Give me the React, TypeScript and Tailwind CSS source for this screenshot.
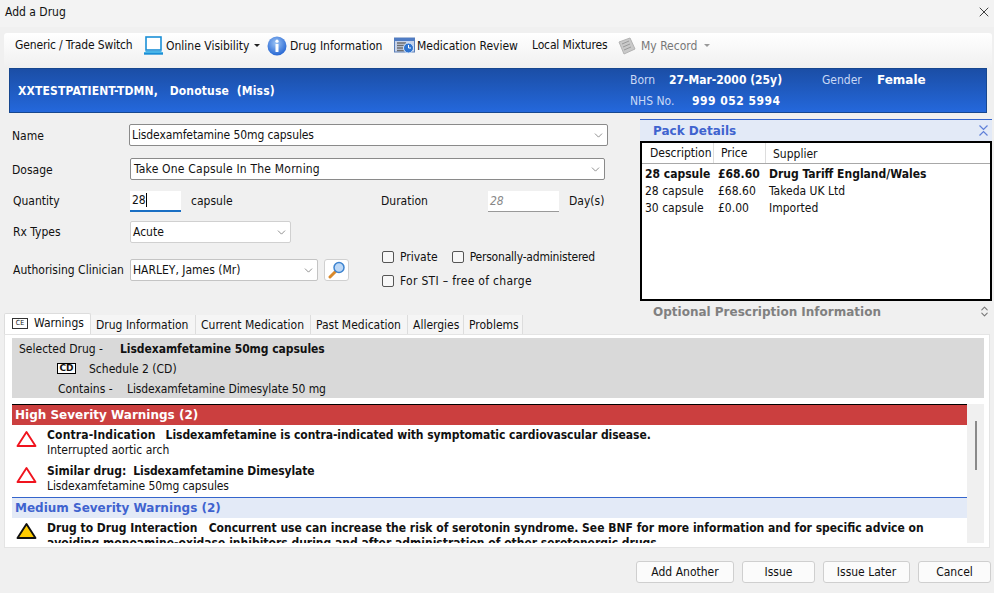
import { X, ChevronDown, ChevronsUpDown } from "lucide-react";

const font = "font-['DejaVu_Sans_Condensed','DejaVu_Sans',sans-serif]";
const boldFont = "font-['DejaVu_Sans_Condensed','DejaVu_Sans',sans-serif] font-bold";
const wideBold = "font-['DejaVu_Sans',sans-serif] font-bold";

function Laptop() {
  return (
    <svg width="21" height="19" viewBox="0 0 21 19" className="shrink-0">
      <rect x="3" y="1" width="15" height="13" fill="#fff" stroke="#1b8fd6" strokeWidth="1.6" />
      <path d="M1 17.500h19" stroke="#1b8fd6" strokeWidth="2.400" />
      <path d="M3 15l-2 2h19l-2-2z" fill="#48b4e8" />
    </svg>
  );
}

function InfoIcon() {
  return (
    <svg width="20" height="20" viewBox="0 0 20 20" className="shrink-0">
      <defs>
        <radialGradient id="info" cx="45%" cy="35%" r="70%">
          <stop offset="0" stopColor="#9cc4f5" />
          <stop offset="1" stopColor="#1d5fd0" />
        </radialGradient>
      </defs>
      <circle cx="10" cy="10" r="9.500" fill="url(#info)" />
      <circle cx="10" cy="5.200" r="1.600" fill="#fff" />
      <rect x="8.500" y="8" width="3" height="8" rx="0.500" fill="#fff" />
    </svg>
  );
}

function ReviewIcon() {
  return (
    <svg width="21" height="17" viewBox="0 0 21 17" className="shrink-0">
      <rect x="0.500" y="1" width="20" height="14" fill="#c7d3ea" stroke="#5a7fb8" />
      <rect x="0.500" y="1" width="20" height="3" fill="#4f7cc4" />
      <path d="M3 6h9M3 8.500h9M3 11h9M3 13.500h7" stroke="#6d6d6d" strokeWidth="1.300" />
      <circle cx="14.500" cy="11" r="5" fill="#2f74d0" stroke="#dce9fa" />
      <path d="M14.500 8v3h2.500" stroke="#fff" fill="none" />
    </svg>
  );
}

function RecordIcon() {
  return (
    <svg width="18" height="18" viewBox="0 0 18 18" className="shrink-0">
      <path d="M1 5l11-4 5 11-11 5z" fill="#c9c9c9" stroke="#b3b3b3" />
      <path d="M4 7l7-3M5 10l7-3M6 13l7-3" stroke="#9a9a9a" />
    </svg>
  );
}

function SearchIcon() {
  return (
    <svg width="18" height="18" viewBox="0 0 18 18">
      <path d="M7.500 10.500L2 16" stroke="#d9892b" strokeWidth="3" strokeLinecap="round" />
      <circle cx="11" cy="6.500" r="5" fill="#bcd8f7" stroke="#3d83cf" strokeWidth="1.500" />
    </svg>
  );
}

function CollapseIcon() {
  return (
    <svg width="11" height="13" viewBox="0 0 11 13" className="text-[#5f7fd8]">
      <path d="M1.500 1.500L5.500 5.500L9.500 1.500M1.500 11.500L5.500 7.500L9.500 11.500" fill="none" stroke="currentColor" strokeWidth="1.200" />
    </svg>
  );
}

function Triangle({ fill, stroke }: { fill: string; stroke: string }) {
  return (
    <svg width="21" height="18" viewBox="0 0 21 18" className="shrink-0">
      <path d="M10.500 2L19.500 16H1.500z" fill={fill} stroke={stroke} strokeWidth="1.900" strokeLinejoin="round" />
    </svg>
  );
}

function Combo({ text, className, textClass }: { text: string; className: string; textClass?: string }) {
  return (
    <div className={`flex h-[22px] items-center justify-between rounded-[2px] bg-white pl-[2px] pr-[2px] ${className}`}>
      <span className={textClass}>{text}</span>
      <ChevronDown size={13} strokeWidth={1.2} className="text-[#555]" />
    </div>
  );
}

function Check({ label, className, textClass }: { label: string; className?: string; textClass?: string }) {
  return (
    <div className={`flex items-center gap-[6px] ${className ?? ""}`}>
      <span className="h-[12px] w-[12px] rounded-[2px] border border-[#555] bg-[#f7f7f7]" />
      <span className={textClass}>{label}</span>
    </div>
  );
}

const packs = [
  { d: "28 capsule", p: "£68.60", s: "Drug Tariff England/Wales", bold: true },
  { d: "28 capsule", p: "£68.60", s: "Takeda UK Ltd" },
  { d: "30 capsule", p: "£0.00", s: "Imported" },
];

const tabs = [
  ["Drug Information", "w-[105px]"],
  ["Current Medication", "w-[115px]"],
  ["Past Medication", "w-[97px]"],
  ["Allergies", "w-[56px]"],
  ["Problems", "w-[59px]"],
];

export default function App() {
  return (
    <div className={`h-[593px] w-[994px] overflow-hidden bg-[#f0f0f0] text-[12px] leading-none text-[#111] ${font}`}>
      <div className="flex h-[27px] items-start justify-between bg-[#f3f3f3] pl-[5px] pr-[1px] pt-[6px]">
        <span>Add a Drug</span>
        <X size={16} strokeWidth={1.2} className="mr-[1px] mt-[-2px]" />
      </div>

      <div className="ml-[4px] mt-[6px] flex h-[35px] w-[988px] items-center rounded-t-[3px] bg-gradient-to-b from-white to-[#f0f0f0] pb-[10px] pl-[11px]">
        <span className="mt-[-2px] w-[128px] tracking-[-0.15px]">Generic / Trade Switch</span>
        <div className="flex w-[124px] items-center gap-[2px]">
          <Laptop />
          <span>Online Visibility</span>
          <span className="ml-[3px] h-0 w-0 border-x-[3px] border-t-[3px] border-x-transparent border-t-[#222]" />
        </div>
        <div className="flex w-[127px] items-center gap-[3px]">
          <InfoIcon />
          <span>Drug Information</span>
        </div>
        <div className="flex w-[138px] items-center gap-[2px]">
          <ReviewIcon />
          <span>Medication Review</span>
        </div>
        <span className="mt-[-2px] w-[86px] tracking-[-0.15px]">Local Mixtures</span>
        <div className="flex items-center gap-[5px] text-[#777]">
          <RecordIcon />
          <span>My Record</span>
          <span className="ml-[2px] h-0 w-0 border-x-[3px] border-t-[3px] border-x-transparent border-t-[#999]" />
        </div>
      </div>

      <div className="ml-[9px] flex h-[45px] w-[978px] items-center justify-between border border-[#17478f] bg-gradient-to-b from-[#1b4ea6] to-[#2468dc] text-white">
        <div className={`pl-[8px] text-[12px] tracking-[0.15px] ${boldFont}`}>XXTESTPATIENT-TDMN,&nbsp;&nbsp; Donotuse&nbsp; (Miss)</div>
        <div className="flex w-[356px] flex-col gap-[9px] text-[#c9d8f5]">
          <div className="flex items-center">
            <span className="w-[39px]">Born</span>
            <span className={`w-[153px] text-white ${boldFont}`}>27-Mar-2000 (25y)</span>
            <span className="w-[55px]">Gender</span>
            <span className={`text-white ${wideBold}`}>Female</span>
          </div>
          <div className="flex items-center">
            <span className="w-[62px]">NHS No.</span>
            <span className={`tracking-[0.5px] text-white ${boldFont}`}>999 052 5994</span>
          </div>
        </div>
      </div>

      <div className="mt-[6px] flex h-[194px]">
        <div className="w-[640px] pt-[5px]">
          <div className="flex h-[22px] items-center">
            <span className="w-[129px] pl-[12px] pt-[1px]">Name</span>
            <Combo text="Lisdexamfetamine 50mg capsules" textClass="tracking-[-0.1px]" className="w-[479px] border border-[#8a8a8a]" />
          </div>
          <div className="mt-[12px] flex h-[22px] items-center">
            <span className="w-[130px] pl-[12px] pt-[1px]">Dosage</span>
            <Combo text="Take One Capsule In The Morning" textClass="pl-[1px] tracking-[0.2px]" className="w-[475px] border border-[#8a8a8a]" />
          </div>
          <div className="mt-[10px] flex h-[22px] items-center">
            <span className="w-[130px] pl-[13px]">Quantity</span>
            <div className="flex h-[21px] w-[51px] items-center border-b-2 border-[#1a6fc4] bg-white pl-[2px]">
              28<span className="h-[14px] w-px bg-black" />
            </div>
            <span className="ml-[10px] w-[190px]">capsule</span>
            <span className="w-[107px]">Duration</span>
            <div className="flex h-[21px] w-[71px] items-center border-b border-[#999] bg-white pl-[2px] italic text-[#888]">28</div>
            <span className="ml-[10px]">Day(s)</span>
          </div>
          <div className="mt-[9px] flex h-[22px] items-center">
            <span className="w-[130px] pl-[13px]">Rx Types</span>
            <Combo text="Acute" className="w-[161px] border border-[#d0d0d0]" />
          </div>
          <div className="flex">
            <div className="mt-[16px] flex h-[22px] items-center">
              <span className="w-[130px] pl-[13px]">Authorising Clinician</span>
              <Combo text="HARLEY, James (Mr)" className="w-[188px] border border-[#c4c4c4]" />
              <div className="ml-[6px] flex h-[22px] w-[25px] items-center justify-center rounded-[3px] border border-[#d0d0d0] bg-white">
                <SearchIcon />
              </div>
            </div>
            <div className="ml-[33px] mt-[8px] flex flex-col gap-[12px]">
              <div className="flex h-[12px] items-center">
                <Check label="Private" />
                <Check label="Personally-administered" textClass="tracking-[-0.2px]" className="ml-[14px]" />
              </div>
              <Check label="For STI – free of charge" textClass="tracking-[0.3px]" />
            </div>
          </div>
        </div>

        <div className="w-[352px]">
          <div className="flex h-[22px] items-center justify-between border-t border-[#3565cc] bg-[#e3eaf7] pl-[13px] pr-[3px]">
            <span className={`text-[12px] text-[#3f63cf] ${wideBold}`}>Pack Details</span>
            <CollapseIcon />
          </div>
          <div className="h-[160px] border-2 border-black bg-white">
            <div className="flex h-[21px] items-center border-b border-[#a8a8a8]">
              <span className="w-[72px] border-r border-[#ddd] pl-[8px] pt-[1px] leading-[19px]">Description</span>
              <span className="w-[52px] border-r border-[#ddd] pl-[7px] pt-[1px] leading-[19px]">Price</span>
              <span className="pl-[7px] pt-[1px]">Supplier</span>
            </div>
            <div className="pt-[1px]">
              {packs.map((row) => (
                <div key={row.p + row.s} className={`flex h-[17px] items-center pl-[3px] ${row.bold ? boldFont : ""}`}>
                  <span className="w-[73px] whitespace-nowrap">{row.d}</span>
                  <span className="w-[51px] whitespace-nowrap">{row.p}</span>
                  <span className="whitespace-nowrap">{row.s}</span>
                </div>
              ))}
            </div>
          </div>
          <div className={`mt-[1px] flex h-[19px] items-center justify-between pl-[13px] pr-[1px] text-[12px] text-[#808080] ${wideBold}`}>
            <span>Optional Prescription Information</span>
            <ChevronsUpDown size={13} className="text-[#777]" />
          </div>
        </div>
      </div>

      <div className="ml-[4px] flex h-[21px] items-end">
        <div className="flex h-[21px] w-[87px] items-center gap-[6px] rounded-t-[2px] border-x border-t border-[#ddd] bg-white pb-[2px] pl-[7px]">
          <span className="flex h-[11px] w-[16px] items-center justify-center border border-[#333] text-[7px]">CE</span>
          <span>Warnings</span>
        </div>
        {tabs.map(([t, w]) => (
          <div key={t} className={`flex h-[19px] items-center border-r border-[#ddd] bg-[#f5f5f5] pl-[5px] ${w}`}>{t}</div>
        ))}
      </div>

      <div className="ml-[4px] h-[214px] w-[986px] border border-[#e4e4e4] bg-white pl-[7px] pr-[5px] pt-[3px]">
        <div className="h-[60px] bg-[#d9d9d9] pl-[7px] pt-[3px]">
          <div className="flex h-[15px] items-center">
            <span className="w-[101px]">Selected Drug -</span>
            <span className={`tracking-[-0.06px] ${boldFont}`}>Lisdexamfetamine 50mg capsules</span>
          </div>
          <div className="mt-[5px] flex h-[15px] items-center pl-[38px]">
            <span className={`mr-[13px] flex h-[11px] w-[19px] items-center justify-center border border-black bg-white text-[9px] ${wideBold}`}>CD</span>
            <span>Schedule 2 (CD)</span>
          </div>
          <div className="mt-[5px] flex h-[15px] items-center pl-[39px]">
            <span className="w-[69px]">Contains -</span>
            <span className="tracking-[-0.1px]">Lisdexamfetamine Dimesylate 50 mg</span>
          </div>
        </div>

        <div className="mt-[6px] flex h-[139px] overflow-hidden">
          <div className="w-[955px] overflow-hidden">
            <div className={`flex h-[21px] items-center border-t border-black bg-[#cb3f3f] pb-[1px] pl-[3px] text-white ${wideBold}`}>High Severity Warnings (2)</div>
            <div className="flex h-[36px] pt-[4px]">
              <div className="w-[35px] pl-[4px] pt-[1px]"><Triangle fill="#fff" stroke="#f0141e" /></div>
              <div>
                <div className={boldFont}>
                  <span className="mr-[10px] tracking-[0.15px]">Contra-Indication</span>
                  <span className="tracking-[-0.06px]">Lisdexamfetamine is contra-indicated with symptomatic cardiovascular disease.</span>
                </div>
                <div className="mt-[3px]">Interrupted aortic arch</div>
              </div>
            </div>
            <div className="flex h-[36px] pt-[4px]">
              <div className="w-[35px] pl-[4px] pt-[1px]"><Triangle fill="#fff" stroke="#f0141e" /></div>
              <div>
                <div className={boldFont}>
                  <span className="mr-[7px]">Similar drug:</span>
                  <span className="tracking-[-0.1px]">Lisdexamfetamine Dimesylate</span>
                </div>
                <div className="mt-[3px] tracking-[-0.1px]">Lisdexamfetamine 50mg capsules</div>
              </div>
            </div>
            <div className={`flex h-[21px] items-center border-t border-[#3565cc] bg-[#e3eaf7] pb-[1px] pl-[3px] text-[#3f63cf] ${wideBold}`}>Medium Severity Warnings (2)</div>
            <div className="flex pt-[3px]">
              <div className="w-[35px] shrink-0 pl-[4px] pt-[1px]"><Triangle fill="#ffcc00" stroke="#111" /></div>
              <div className={`w-[885px] leading-[15px] ${boldFont}`}>
                Drug to Drug Interaction&nbsp;&nbsp;&nbsp;Concurrent use can increase the risk of serotonin syndrome. See BNF for more information and for specific advice on avoiding monoamine-oxidase inhibitors during and after administration of other serotonergic drugs.
              </div>
            </div>
          </div>
          <div className="relative w-[17px] bg-[#f0f0f0]">
            <div className="absolute left-[8px] top-[17px] h-[49px] w-[2px] bg-[#8a8a8a]" />
          </div>
        </div>
      </div>

      <div className="mt-[13px] flex justify-end gap-[8px] pr-[3px]">
        {[
          ["Add Another", "w-[98px]"],
          ["Issue", "w-[73px]"],
          ["Issue Later", "w-[87px]"],
          ["Cancel", "w-[73px]"],
        ].map(([label, w]) => (
          <div key={label} className={`flex h-[22px] items-center justify-center rounded-[3px] border border-[#cfcfcf] bg-[#fbfbfb] ${w}`}>{label}</div>
        ))}
      </div>
    </div>
  );
}
